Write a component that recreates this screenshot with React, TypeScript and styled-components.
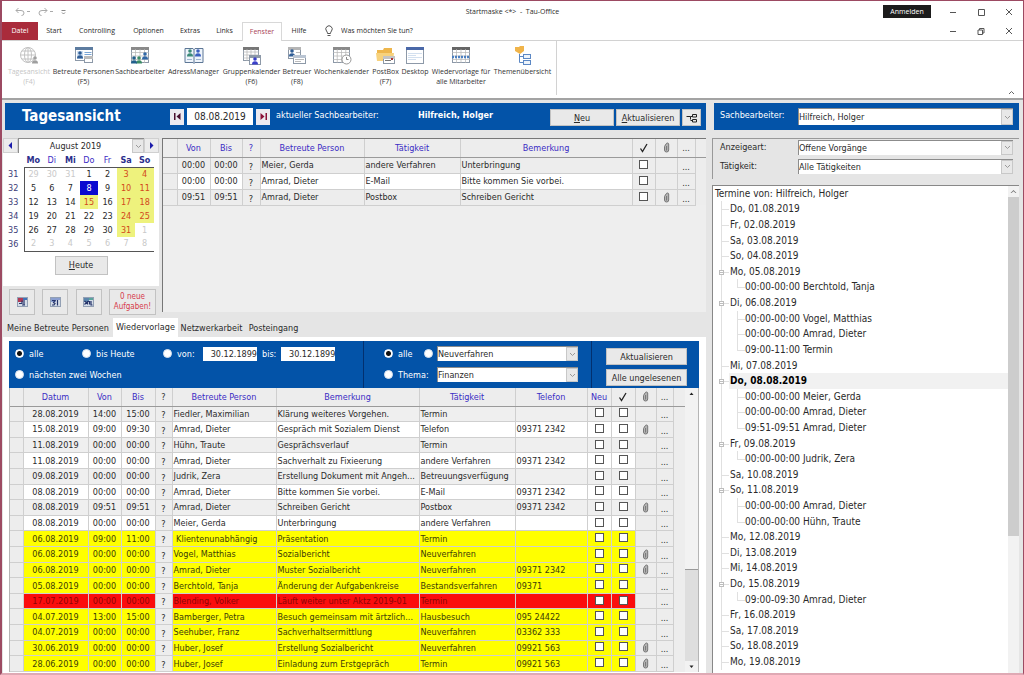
import React from "react";
import styled, { createGlobalStyle, css } from "styled-components";

const blue = "#0353a8";
const panel = "#e5e5e5";
const link = "#3a2cc4";

const GlobalStyle = createGlobalStyle`
  *, *::before, *::after { box-sizing: border-box; }
  body { margin: 0; background: #fff; }
  body, button, input, select, table {
    font-family: "DejaVu Sans Condensed", "DejaVu Sans", sans-serif;
    font-size: 9px;
    line-height: 12px;
    color: #2a2a2a;
  }
  button, input, select { margin: 0; padding: 0; border-radius: 0; }
  input[type="checkbox"], input[type="radio"] { appearance: none; flex: none; }
`;

/* ---------- window frame ---------- */

const Window = styled.div`
  display: flex;
  flex-direction: column;
  height: 100vh;
  min-height: 600px;
  border: solid #9c4a62;
  border-width: 1px 1px 2px 2px;
  border-bottom-color: #dfa9b4;
`;

const TitleBar = styled.header`
  display: grid;
  grid-template-columns: 1fr auto 1fr;
  align-items: center;
  height: 21px;
  padding: 0 4px;
  font-family: "Open Sans", "Noto Sans", sans-serif;
  font-size: 7px;
`;

const QuickAccess = styled.div`
  display: flex;
  align-items: center;
  gap: 5px;
  padding-left: 8px;
`;

const WindowControls = styled.div`
  display: flex;
  align-items: center;
  justify-content: flex-end;
`;

const PlainButton = styled.button`
  display: flex;
  align-items: center;
  justify-content: center;
  border: 0;
  background: none;
`;

const ControlButton = styled(PlainButton)`
  width: 28px;
  height: 16px;
  &:last-child { width: 20px; margin-left: 4px; }
`;

const LoginButton = styled.button`
  width: 48px;
  height: 13px;
  margin-right: 8px;
  border: 0;
  background: #1c1c1c;
  color: #fff;
  font-family: "Open Sans", "Noto Sans", sans-serif;
  font-size: 7px;
`;

const TabBar = styled.nav`
  display: flex;
  align-items: stretch;
  height: 19px;
  padding-right: 4px;
  border-bottom: 1px solid #d2d2d2;
`;

const RibbonTab = styled.button<{ $kind?: "file" | "active"; $width: number }>`
  width: ${(p) => p.$width}px;
  border: 0;
  background: #fff;
  font-family: "Open Sans", "Noto Sans", sans-serif;
  font-size: 7px;
  ${(p) => p.$kind === "file" && css`
    background: #a92b3b;
    color: #fff;
  `}
  ${(p) => p.$kind === "active" && css`
    margin-bottom: -1px;
    border: solid #d8d8d8;
    border-width: 1px 1px 0;
    color: #a94458;
  `}
`;

const TellMe = styled.label`
  display: flex;
  flex: 1;
  align-items: center;
  gap: 8px;
  padding-left: 9px;
  input {
    flex: 1;
    min-width: 0;
    border: 0;
    font-family: "Open Sans", "Noto Sans", sans-serif;
    font-size: 7px;
  }
  input::placeholder { color: #2a2a2a; opacity: 1; }
`;

const Ribbon = styled.div`
  display: flex;
  height: 59px;
  padding: 0 4px 3px 3px;
  border-bottom: 2px solid #a3a3a3;
`;

const RibbonGroup = styled.div`
  display: flex;
  padding-right: 3px;
  border-right: 1px solid #d2d2d2;
`;

const RibbonItem = styled.button<{ $width: number; $muted?: boolean }>`
  display: flex;
  flex-direction: column;
  align-items: center;
  gap: 2px;
  width: ${(p) => p.$width}px;
  padding-top: 5px;
  border: 0;
  background: none;
  font-family: "Open Sans", "Noto Sans", sans-serif;
  font-size: 7px;
  line-height: 10px;
  white-space: pre;
  color: ${(p) => (p.$muted ? "#c6c6c6" : "#333")};
`;

const CollapseButton = styled(PlainButton)`
  align-self: flex-end;
  margin: 0 2px 0 auto;
  padding: 0 2px;
`;

/* ---------- shared form parts ---------- */

const PushButton = styled.button<{ $width: number; $height?: number }>`
  width: ${(p) => p.$width}px;
  height: ${(p) => p.$height ?? 17}px;
  border: 1px solid #c2c2c2;
  background: #e9e9e9;
  white-space: nowrap;
`;

const IconButton = styled(PushButton)<{ $red?: boolean }>`
  display: flex;
  align-items: center;
  justify-content: center;
  color: ${(p) => (p.$red ? "#d63a4a" : "#2a2a2a")};
  font-size: ${(p) => (p.$red ? 8 : 9)}px;
  line-height: 10px;
  white-space: pre;
`;

const SelectFrame = styled.span`
  display: flex;
  flex: 1;
  min-width: 0;
  height: 15px;
  border: solid #8c8c8c;
  border-width: 1px 0 0 1px;
  background: #fff;
  select {
    flex: 1;
    min-width: 0;
    appearance: none;
    border: 0;
    background: none;
  }
`;

const Chevron = styled.span`
  display: flex;
  align-items: center;
  justify-content: center;
  width: 12px;
  border: 1px solid #c8c8c8;
  background: #e8e8e8;
`;

const ChevronIcon = () => (
  <svg width="7" height="5" viewBox="0 0 7 5" fill="none" stroke="#999"><path d="M1 1l2.500 2.500L6 1" /></svg>
);

const DropDown = ({ label, value, id }: { label?: string; value: string; id?: string }) => (
  <SelectFrame>
    <select id={id} aria-label={label} defaultValue={value}>
      <option>{value}</option>
    </select>
    <Chevron><ChevronIcon /></Chevron>
  </SelectFrame>
);

const Radio = styled.input.attrs({ type: "radio" })`
  width: 9px;
  height: 9px;
  margin: 0;
  border: 1px solid #d9e3ef;
  border-radius: 50%;
  background: #fff;
  &:checked {
    border-color: #fff;
    background: radial-gradient(circle, #111 0 2px, #fff 3px);
  }
`;

const RadioLabel = styled.label<{ $width?: number }>`
  display: flex;
  flex: none;
  align-items: center;
  gap: 5px;
  width: ${(p) => (p.$width ? p.$width + "px" : "auto")};
  color: #fff;
  white-space: nowrap;
`;

const CheckBox = styled.input.attrs({ type: "checkbox" })`
  display: block;
  width: 9px;
  height: 9px;
  margin: 0 auto 2px;
  border: 1px solid #555;
  background: #fff;
`;

/* ---------- body layout ---------- */

const Body = styled.main`
  display: flex;
  flex: 1;
  gap: 6px;
  min-height: 0;
  padding: 3px 4px 0 1px;
  background: ${panel};
`;

const MainColumn = styled.div`
  display: flex;
  flex: 1;
  flex-direction: column;
  min-width: 0;
`;

const SideColumn = styled.aside`
  display: flex;
  flex-direction: column;
  width: 307px;
  min-height: 0;
`;

const BlueBar = styled.div`
  display: flex;
  flex: none;
  align-items: center;
  height: 27px;
  margin-left: 2px;
  background: ${blue};
  color: #fff;
`;

const Heading = styled.h1`
  width: 165px;
  margin: 0;
  padding: 0 0 2px 17px;
  font-size: 15px;
  line-height: 20px;
`;

const DateBox = styled.input`
  width: 66px;
  height: 17px;
  border: 0;
  margin: 0 3px;
  font-size: 10px;
  text-align: center;
`;

const StepButton = styled(PlainButton)`
  width: 14px;
  height: 16px;
  background: #eceaf0;
`;

const BarText = styled.span<{ $width: number }>`
  width: ${(p) => p.$width}px;
  padding: 0 0 4px 6px;
  white-space: nowrap;
`;

const BarActions = styled.div`
  display: flex;
  gap: 2px;
  margin: 2px 5px 0 auto;
`;

const Upper = styled.section`
  display: flex;
  flex: none;
  gap: 3px;
  height: 180px;
  margin-top: 8px;
`;

const CalendarColumn = styled.div`
  display: flex;
  flex-direction: column;
  width: 156px;
`;

const CalendarCard = styled.div`
  display: flex;
  flex-direction: column;
  align-items: center;
  height: 148px;
  background: #fff;
`;

const MonthRow = styled.div`
  display: flex;
  align-self: stretch;
  height: 15px;
  background: #ececec;
  select { text-align: center; text-align-last: center; }
`;

const MonthButton = styled(PlainButton)`
  width: 15px;
  border: 1px solid #d0d0d0;
`;

const CalendarTable = styled.table`
  align-self: flex-start;
  width: 151px;
  margin: 0 0 4px;
  border-collapse: collapse;
  table-layout: fixed;
  th, td { padding: 0; text-align: center; }
  thead th {
    height: 14px;
    border-bottom: 1px solid #555;
    font-weight: normal;
    color: ${link};
  }
  thead th.strong { font-weight: bold; color: #2b2f8c; }
  thead td { width: 21px; }
  tbody th {
    font-weight: normal;
    color: #3c3c78;
    border-right: 1px solid #555;
  }
  tbody tr { height: 14px; }
  tbody tr:last-child td { border-bottom: 1px solid #555; }
`;

const Day = styled.td<{ $kind: string }>`
  line-height: 13px;
  ${(p) => p.$kind === "out" && css`color: #c9c9c9;`}
  ${(p) => p.$kind === "off" && css`background: #eef27d; color: #d2491c;`}
  ${(p) => p.$kind === "sel" && css`background: #0a0ad0; color: #fff;`}
`;

const ShortcutRow = styled.div`
  display: flex;
  align-items: center;
  justify-content: space-between;
  flex: 1;
  padding: 0 3px 0 6px;
`;

/* ---------- data grids ---------- */

const Grid = styled.table`
  width: 100%;
  border-collapse: collapse;
  table-layout: fixed;
  th, td {
    overflow: hidden;
    padding: 0 1px;
    border: 1px solid #cfcfcf;
    white-space: nowrap;
    text-overflow: ellipsis;
  }
  th {
    height: 18px;
    border-top: 0;
    border-bottom-color: #9a9a9a;
    background: #ededed;
    font-weight: normal;
    color: ${link};
  }
  th.dark { color: #333; }
  th:first-child, td:first-child { border-left: 0; }
  th:last-child { border-right: 0; }
  th svg, td svg { display: block; margin: 0 auto; }
`;

const Row = styled.tr<{ $bg: string; $color?: string; $height: number }>`
  height: ${(p) => p.$height}px;
  td { background: ${(p) => p.$bg}; color: ${(p) => p.$color ?? "#2a2a2a"}; }
  td.c { text-align: center; }
  td.low { text-align: center; vertical-align: bottom; }
  td.plain { background: #ededed; color: #2a2a2a; }
  td.none { border: 0; background: #ededed; }
`;

const UpperList = styled.div`
  flex: 1;
  min-width: 0;
  height: 174px;
  border: solid #777;
  border-width: 1px 0 0 1px;
  background: #eeeeee;
`;

const TabStrip = styled.div`
  display: flex;
  flex: none;
  align-items: stretch;
  height: 19px;
`;

const FormTab = styled.button<{ $width: number; $active?: boolean }>`
  width: ${(p) => p.$width}px;
  border: 0;
  background: ${(p) => (p.$active ? "#fff" : "transparent")};
  padding: ${(p) => (p.$active ? "0 0 2px" : "0")};
  white-space: nowrap;
`;

const TabPage = styled.section`
  display: flex;
  flex: 1;
  flex-direction: column;
  min-height: 0;
  padding: 4px 7px 1px 6px;
  background: #fff;
`;

const FilterBar = styled.div`
  display: flex;
  flex: none;
  height: 47px;
  background: ${blue};
`;

const FilterGroup = styled.fieldset<{ $width?: number; $inset?: number }>`
  display: flex;
  flex-direction: column;
  gap: 6px;
  width: ${(p) => (p.$width ? p.$width + "px" : "auto")};
  min-width: 0;
  margin: 0;
  padding: 5px 13px 0 ${(p) => p.$inset ?? 6}px;
  border: 0;
  border-right: 1px solid #02306f;
`;

const FilterActions = styled.div`
  display: flex;
  flex: 1;
  flex-direction: column;
  align-items: flex-end;
  gap: 4px;
  padding: 7px 12px 0 0;
`;

const FilterLine = styled.div`
  display: flex;
  align-items: center;
  height: 15px;
`;

const RangeBox = styled.input`
  width: 54px;
  height: 14px;
  margin: 0 5px;
  border: 0;
  text-align: right;
`;

const GridArea = styled.div`
  display: flex;
  flex: 1;
  min-height: 0;
  border: solid #b5b5b5;
  border-width: 0 1px;
  background: #ededed;
  table { height: 100%; }
`;

const ScrollBar = styled.div<{ $width: number }>`
  display: flex;
  flex: none;
  flex-direction: column;
  align-items: center;
  width: ${(p) => p.$width}px;
  background: #f2f2f2;
  svg { flex: none; margin: 2px 0; }
`;

const ScrollSpace = styled.div<{ $grow: number }>`
  flex: ${(p) => p.$grow};
`;

const ScrollThumb = styled.div<{ $grow: number }>`
  flex: ${(p) => p.$grow};
  align-self: stretch;
  background: #cdcdcd;
`;

const LowerThumb = styled(ScrollThumb)`
  border-top: 1px solid #999;
  background: #dedede;
`;

/* ---------- side column ---------- */

const SideField = styled.div<{ $light?: boolean }>`
  display: flex;
  flex: 1;
  align-items: center;
  color: ${(p) => (p.$light ? "#fff" : "#2a2a2a")};
  label { width: 78px; padding-bottom: ${(p) => (p.$light ? 4 : 1)}px; }
  ${SelectFrame} { height: ${(p) => (p.$light ? 17 : 15)}px; }
`;

const SideBar = styled(BlueBar)`
  padding: 0 6px;
`;

const FilterBox = styled.div`
  display: flex;
  flex: none;
  flex-direction: column;
  gap: 3px;
  height: 41px;
  margin-top: 8px;
  padding: 0 6px 5px 7px;
  border: solid #999;
  border-width: 1px 0 0 1px;
`;

const TreeFrame = styled.div`
  display: flex;
  flex: 1;
  min-height: 0;
  margin-top: 6px;
  border: solid #888;
  border-width: 1px 0 0 1px;
  background: #fff;
`;

const Tree = styled.ul`
  display: flex;
  flex: 1;
  flex-direction: column;
  margin: 0;
  padding: 0 0 3px;
  list-style: none;
  font-size: 10px;
`;

const TreeRow = styled.li<{ $current?: boolean }>`
  display: flex;
  flex: 1;
  align-items: center;
  min-height: 0;
  padding-left: 2px;
  white-space: pre;
  ${(p) => p.$current && css`
    background: linear-gradient(90deg, #fff 16px, #f1f1f1 16px);
    color: #000;
    font-weight: bold;
  `}
`;

const Branch = styled.svg`
  flex: none;
  width: 15px;
  height: 16px;
  stroke: #e0e0e0;
  fill: none;
  shape-rendering: crispEdges;
`;

/* ---------- icons ---------- */

const Triangle = ({ d, color = "#1c1caa" }: { d: string; color?: string }) => (
  <svg width="7" height="7" viewBox="0 0 7 7" fill={color}><path d={d} /></svg>
);

const Tick = () => (
  <svg width="10" height="10" viewBox="0 0 10 10" fill="none" stroke="#222"><path d="M1.500 5.500l2 3 4.500-7.500" strokeWidth="1.300" /></svg>
);

const Clip = () => (
  <svg width="7" height="11" viewBox="0 0 7 11" fill="#b4b4b4" stroke="#777">
    <path d="M1.500 4.500l1.500-2.500q.6-1 1.500-1t1.200 1v6q0 2-2.100 2t-2.100-2zM3.600 4v4.500" />
  </svg>
);

const Hierarchy = () => (
  <svg width="12" height="10" viewBox="0 0 12 10" fill="none" stroke="#222">
    <path d="M.5 3.500h4v3M6.500 1.500h4V4h-4zM6.500 6.500h4V9h-4zM4.500 3.500h2M4.500 7.500h2" />
  </svg>
);

const Sheet = ({ x, y, w, h, head }: { x: number; y: number; w: number; h: number; head: string }) => (
  <g>
    <rect x={x + 0.5} y={y + 0.5} width={w - 1} height={h - 1} fill="#fff" stroke="#8d99a8" />
    <rect x={x} y={y} width={w} height="3" fill={head} />
  </g>
);

const Lattice = ({ x, y, w, h }: { x: number; y: number; w: number; h: number }) => (
  <path
    fill="none"
    stroke="#b4b4b4"
    strokeWidth=".7"
    d={[1, 2, 3].map((i) => `M${x + (w * i) / 4} ${y}v${h}M${x} ${y + (h * i) / 4}h${w}`).join("")}
  />
);

const Person = ({ x, y, color }: { x: number; y: number; color: string }) => (
  <g fill={color}>
    <circle cx={x} cy={y} r="1.800" />
    <path d={`M${x - 3} ${y + 5.5}q0-3.200 3-3.200t3 3.200z`} />
  </g>
);

const ribbonIcons: Record<string, React.ReactNode> = {
  globe: (
    <g stroke="#c2c2c2" fill="none">
      <circle cx="9" cy="9" r="7.500" /><ellipse cx="9" cy="9" rx="3.500" ry="7.500" />
      <path d="M1.500 9h15M3 5h12M3 13h12M9 1.500v15" />
      <g stroke="none"><Person x={16} y={12} color="#9f9f9f" /></g>
    </g>
  ),
  clients: (
    <g>
      <Sheet x={1} y={1} w={18} h={14} head="#5d7ca0" />
      <rect x="3" y="5" width="6" height="8" fill="#cfe0f2" /><Person x={6} y={7} color="#2f5d96" />
      <path d="M10.500 6.500h7M10.500 8.500h7" stroke="#7aa6d6" />
      <Sheet x={10} y={10} w={9} h={7} head="#bcbcbc" />
    </g>
  ),
  staff: (
    <g>
      <Sheet x={1} y={1} w={18} h={16} head="#8a8a8a" /><Lattice x={1} y={3} w={18} h={14} />
      <Person x={15} y={8} color="#2f66a5" /><Person x={9} y={12} color="#3d8c66" /><Person x={4} y={12} color="#215f8c" />
    </g>
  ),
  book: (
    <g>
      <path d="M1 2.500h8l1 1 1-1h8v14h-8l-1 1-1-1H1z" fill="#eef4fb" stroke="#5d7796" />
      <path d="M10 3v14" stroke="#5d7796" />
      <Person x={6} y={5} color="#3b8a78" /><Person x={14} y={5} color="#3a5fc0" />
      <path d="M3 13.500h5M12 13.500h5" stroke="#9fb6d0" />
    </g>
  ),
  group: (
    <g>
      <Sheet x={1} y={1} w={16} h={14} head="#777" /><Lattice x={1} y={3} w={16} h={12} />
      <Sheet x={7} y={9} w={12} h={10} head="#8d99a8" /><Person x={13} y={13} color="#3a3fc8" />
    </g>
  ),
  carer: (
    <g>
      <Sheet x={1} y={1} w={13} h={12} head="#b5b5b5" /><Person x={5} y={5} color="#2f5d96" />
      <path d="M9 6.500h4" stroke="#bbb" />
      <Sheet x={6} y={9} w={13} h={9} head="#b9c4d2" /><path d="M8 13.500h9M8 15.500h6" stroke="#bbb" />
    </g>
  ),
  week: (
    <g>
      <Sheet x={1} y={1} w={17} h={16} head="#8a8a8a" /><Lattice x={1} y={3} w={17} h={14} />
      <circle cx="14.500" cy="13.500" r="4.500" fill="#fff" stroke="#999" /><path d="M14.500 11v2.500h2" fill="none" stroke="#888" />
    </g>
  ),
  post: (
    <g>
      <path d="M1 4h6l1-2h8v12H1z" fill="#eeb64c" /><path d="M0 7h18l-1 8H1z" fill="#f7d27d" />
      <Sheet x={7} y={10} w={12} h={8} head="#c4c4c4" /><path d="M9 14.500h6" stroke="#777" /><rect x="15" y="12" width="2" height="2" fill="#a33" />
    </g>
  ),
  desktop: (
    <g>
      <Sheet x={1} y={1} w={18} h={17} head="#4a68a8" />
      <path d="M3 7.500h14M3 9.500h8M3 11.500h14M3 13.500h8" stroke="#d3e0ef" />
    </g>
  ),
  resubmit: (
    <g>
      <Sheet x={1} y={1} w={18} h={16} head="#666" /><Lattice x={1} y={3} w={18} h={14} />
      <path d="M1 11h18" stroke="#4b7fc0" strokeWidth="2.500" strokeDasharray="2 1" />
    </g>
  ),
  topics: (
    <g fill="none">
      <path d="M2 1h4l1-1h4v5l-4 3-5-3z" fill="#f0b44a" />
      <path d="M6.500 8v8.500H10M6.500 10.500H10" stroke="#5c88c4" />
      <rect x="10.500" y="8.500" width="7" height="4" stroke="#5c88c4" fill="#eef4fb" />
      <rect x="10.500" y="14.500" width="7" height="4" stroke="#5c88c4" fill="#eef4fb" />
    </g>
  ),
};

const MiniGlyph = ({ left, right, mark }: { left: string; right: string; mark: string }) => (
  <svg width="11" height="10" viewBox="0 0 11 10">
    <rect x=".5" y=".5" width="10" height="9" fill="#d5dde8" stroke="#93a0b4" />
    <rect x="1" y="1" width="5" height="4" fill={left} />
    <rect x="6" y="1" width="4" height="2" fill={right} />
    <path d={mark} fill="none" stroke="#27356b" strokeWidth="1.200" />
  </svg>
);

/* ---------- data ---------- */

const ribbonItems: [string, string, number, boolean?][] = [
  ["globe", "Tagesansicht\n(F4)", 48, true],
  ["clients", "Betreute Personen\n(F5)", 61],
  ["staff", "Sachbearbeiter", 52],
  ["book", "AdressManager", 55],
  ["group", "Gruppenkalender\n(F6)", 61],
  ["carer", "Betreuer\n(F8)", 30],
  ["week", "Wochenkalender", 59],
  ["post", "PostBox\n(F7)", 29],
  ["desktop", "Desktop", 30],
  ["resubmit", "Wiedervorlage für\nalle Mitarbeiter", 62],
  ["topics", "Themenübersicht", 61],
];

const weekdays: [string, boolean][] = [
  ["Mo", true], ["Di", false], ["Mi", true], ["Do", false], ["Fr", false], ["Sa", true], ["So", true],
];

const weeks: [number, number[]][] = [
  [31, [29, 30, 31, 1, 2, 3, 4]],
  [32, [5, 6, 7, 8, 9, 10, 11]],
  [33, [12, 13, 14, 15, 16, 17, 18]],
  [34, [19, 20, 21, 22, 23, 24, 25]],
  [35, [26, 27, 28, 29, 30, 31, 1]],
  [36, [2, 3, 4, 5, 6, 7, 8]],
];

const dayKind = (row: number, col: number, day: number) => {
  if ((row === 0 && day > 20) || (row > 3 && day < 10)) return "out";
  if (row === 1 && day === 8) return "sel";
  return col > 4 || day === 15 ? "off" : "in";
};

const todayRows = [
  ["00:00", "00:00", "Meier, Gerda", "andere Verfahren", "Unterbringung", ""],
  ["00:00", "00:00", "Amrad, Dieter", "E-Mail", "Bitte kommen Sie vorbei.", ""],
  ["09:51", "09:51", "Amrad, Dieter", "Postbox", "Schreiben Gericht", "x"],
];

const rows = [
  ["28.08.2019", "14:00", "15:00", "Fiedler, Maximilian", "Klärung weiteres Vorgehen.", "Termin", "", ""],
  ["15.08.2019", "09:00", "09:30", "Amrad, Dieter", "Gespräch mit Sozialem Dienst", "Telefon", "09371 2342", "x"],
  ["11.08.2019", "00:00", "00:00", "Hühn, Traute", "Gesprächsverlauf", "Termin", "", ""],
  ["11.08.2019", "00:00", "00:00", "Amrad, Dieter", "Sachverhalt zu Fixieerung", "andere Verfahren", "09371 2342", ""],
  ["09.08.2019", "00:00", "00:00", "Judrik, Zera", "Erstellung Dokument mit Angeh...", "Betreuungsverfügung", "", ""],
  ["08.08.2019", "00:00", "00:00", "Amrad, Dieter", "Bitte kommen Sie vorbei.", "E-Mail", "09371 2342", ""],
  ["08.08.2019", "09:51", "09:51", "Amrad, Dieter", "Schreiben Gericht", "Postbox", "09371 2342", "x"],
  ["08.08.2019", "00:00", "00:00", "Meier, Gerda", "Unterbringung", "andere Verfahren", "", ""],
  ["06.08.2019", "09:00", "11:00", "\u00a0Klientenunabhängig", "Präsentation", "Termin", "", ""],
  ["06.08.2019", "00:00", "00:00", "Vogel, Matthias", "Sozialbericht", "Neuverfahren", "", "x"],
  ["06.08.2019", "00:00", "00:00", "Amrad, Dieter", "Muster Sozialbericht", "Neuverfahren", "09371 2342", "x"],
  ["05.08.2019", "00:00", "00:00", "Berchtold, Tanja", "Änderung der Aufgabenkreise", "Bestandsverfahren", "09371", ""],
  ["17.07.2019", "00:00", "00:00", "Blending, Volker", "Läuft weiter unter Aktz 2019-01", "Termin", "", ""],
  ["04.07.2019", "13:00", "15:00", "Bamberger, Petra", "Besuch gemeinsam mit ärtzlich...", "Hausbesuch", "095 24422", ""],
  ["04.07.2019", "00:00", "00:00", "Seehuber, Franz", "Sachverhaltsermittlung", "Neuverfahren", "03362 333", ""],
  ["30.06.2019", "00:00", "00:00", "Huber, Josef", "Erstellung Sozialbericht", "Neuverfahren", "09921 563", "x"],
  ["28.06.2019", "00:00", "00:00", "Huber, Josef", "Einladung zum Erstgepräch", "Termin", "09921 563", "x"],
];

const tree: [string, string[]][] = [
  ["Do, 01.08.2019", []],
  ["Fr, 02.08.2019", []],
  ["Sa, 03.08.2019", []],
  ["So, 04.08.2019", []],
  ["Mo, 05.08.2019", ["00:00-00:00 Berchtold, Tanja"]],
  ["Di, 06.08.2019", ["00:00-00:00 Vogel, Matthias", "00:00-00:00 Amrad, Dieter", "09:00-11:00 Termin"]],
  ["Mi, 07.08.2019", []],
  ["Do, 08.08.2019", ["00:00-00:00 Meier, Gerda", "00:00-00:00 Amrad, Dieter", "09:51-09:51 Amrad, Dieter"]],
  ["Fr, 09.08.2019", ["00:00-00:00 Judrik, Zera"]],
  ["Sa, 10.08.2019", []],
  ["So, 11.08.2019", ["00:00-00:00 Amrad, Dieter", "00:00-00:00 Hühn, Traute"]],
  ["Mo, 12.08.2019", []],
  ["Di, 13.08.2019", []],
  ["Mi, 14.08.2019", []],
  ["Do, 15.08.2019", ["09:00-09:30 Amrad, Dieter"]],
  ["Fr, 16.08.2019", []],
  ["Sa, 17.08.2019", []],
  ["So, 18.08.2019", []],
  ["Mo, 19.08.2019", []],
];

const rowColors = (i: number) => {
  if (i === 12) return { $bg: "#fb0d0d", $color: "#8a0606" };
  if (i > 7) return { $bg: "#ffff00", $color: "#3c3c08" };
  return { $bg: i % 2 ? "#ffffff" : "#efefef" };
};

const Cols = ({ widths }: { widths: (number | null)[] }) => (
  <colgroup>
    {widths.map((w, i) => <col key={i} width={w ?? undefined} />)}
  </colgroup>
);

const winPaths = ["M2 5.500h6", "M2.500 2.500h6v6h-6z", "M2 2l6 6M8 2l-6 6"];

const Controls = ({ restore }: { restore?: boolean }) => (
  <>
    {["Minimieren", restore ? "Wiederherstellen" : "Maximieren", "Schließen"].map((name, i) => (
      <ControlButton key={name} aria-label={name}>
        <svg width="10" height="10" viewBox="0 0 10 10" fill="none" stroke="#555">
          <path d={i === 1 && restore ? "M2 4h4.500v4.500H2zM3.500 4V2.500H8V7H6.500" : winPaths[i]} />
        </svg>
      </ControlButton>
    ))}
  </>
);

/* ---------- page sections ---------- */

const Calendar = () => (
  <CalendarColumn>
    <CalendarCard>
      <MonthRow>
        <MonthButton aria-label="Voriger Monat"><Triangle d="M5 0v7L1.500 3.500z" /></MonthButton>
        <DropDown label="Monat" value="August 2019" />
        <MonthButton aria-label="Nächster Monat"><Triangle d="M2 0v7l3.500-3.500z" /></MonthButton>
      </MonthRow>
      <CalendarTable>
        <thead>
          <tr>
            <td />
            {weekdays.map(([name, strong]) => (
              <th key={name} className={strong ? "strong" : undefined}>{name}</th>
            ))}
          </tr>
        </thead>
        <tbody>
          {weeks.map(([week, days], r) => (
            <tr key={week}>
              <th>{week}</th>
              {days.map((day, c) => <Day key={c} $kind={dayKind(r, c, day)}>{day}</Day>)}
            </tr>
          ))}
        </tbody>
      </CalendarTable>
      <PushButton $width={53} $height={19}><u>H</u>eute</PushButton>
    </CalendarCard>
    <ShortcutRow>
      <IconButton $width={26} $height={26} aria-label="Termine">
        <MiniGlyph left="#b23a55" right="#3f73b8" mark="M2 6.500h3V3.500M7 3v5M5 8h3" />
      </IconButton>
      <IconButton $width={26} $height={26} aria-label="Kalender">
        <MiniGlyph left="#8b9fd0" right="#8b9fd0" mark="M2 3.500h3L3.500 5.500 5 6.500 4 8H2M7.500 3v5.500" />
      </IconButton>
      <IconButton $width={26} $height={26} aria-label="Jahresansicht">
        <MiniGlyph left="#5c86ad" right="#5aa59c" mark="M1.500 4l2 1.500-2 2M4.500 7.500V4.500h2v3M8 4v4h1.500" />
      </IconButton>
      <IconButton $width={47} $height={26} $red>{"0 neue\nAufgaben!"}</IconButton>
    </ShortcutRow>
  </CalendarColumn>
);

const TodayGrid = () => (
  <UpperList>
    <Grid>
      <Cols widths={[14, 33, 32, 18, 104, 96, null, 23, 22, 18, 11]} />
      <thead>
        <tr>
          <th /><th>Von</th><th>Bis</th><th>?</th><th>Betreute Person</th><th>Tätigkeit</th><th>Bemerkung</th>
          <th><Tick /></th><th><Clip /></th><th className="dark">...</th><th />
        </tr>
      </thead>
      <tbody>
        {todayRows.map(([from, to, person, kind, note, clip], i) => (
          <Row key={i} $height={16} $bg={i === 1 ? "#ffffff" : "#ededed"}>
            <td className="plain" />
            <td className="c">{from}</td>
            <td className="c">{to}</td>
            <td className="low plain">?</td>
            <td>{person}</td>
            <td>{kind}</td>
            <td>{note}</td>
            <td className="plain"><CheckBox aria-label="Erledigt" /></td>
            <td className="plain">{clip && <Clip />}</td>
            <td className="low plain">...</td>
            <td className="none" />
          </Row>
        ))}
      </tbody>
    </Grid>
  </UpperList>
);

const Filters = () => (
  <FilterBar>
    <FilterGroup $width={355}>
      <FilterLine>
        <RadioLabel $width={67}><Radio name="range" defaultChecked />alle</RadioLabel>
        <RadioLabel $width={81}><Radio name="range" />bis Heute</RadioLabel>
        <RadioLabel $width={35}><Radio name="range" />von:</RadioLabel>
        <RangeBox aria-label="von" defaultValue="30.12.1899" />
        <RadioLabel htmlFor="range-to">bis:</RadioLabel>
        <RangeBox id="range-to" defaultValue="30.12.1899" />
      </FilterLine>
      <FilterLine>
        <RadioLabel><Radio name="range" />nächsten zwei Wochen</RadioLabel>
      </FilterLine>
    </FilterGroup>
    <FilterGroup $width={228} $inset={20}>
      <FilterLine>
        <RadioLabel $width={40}><Radio name="topic" defaultChecked />alle</RadioLabel>
        <RadioLabel $width={13}><Radio name="topic" aria-label="Tätigkeit" /></RadioLabel>
        <DropDown label="Tätigkeit" value="Neuverfahren" />
      </FilterLine>
      <FilterLine>
        <RadioLabel $width={53}><Radio name="topic" />Thema:</RadioLabel>
        <DropDown label="Thema" value="Finanzen" />
      </FilterLine>
    </FilterGroup>
    <FilterActions>
      <PushButton $width={81}>Aktualisieren</PushButton>
      <PushButton $width={81}>Alle ungelesenen</PushButton>
    </FilterActions>
  </FilterBar>
);

const ResubmissionGrid = () => (
  <GridArea>
    <Grid>
      <Cols widths={[13, 65, 33, 34, 17, 104, null, 96, 72, 24, 24, 21, 17, 12]} />
      <thead>
        <tr>
          <th /><th>Datum</th><th>Von</th><th>Bis</th><th className="dark">?</th><th>Betreute Person</th>
          <th>Bemerkung</th><th>Tätigkeit</th><th>Telefon</th><th>Neu</th><th><Tick /></th><th><Clip /></th>
          <th className="dark">...</th><th />
        </tr>
      </thead>
      <tbody>
        {rows.map(([date, from, to, person, note, kind, phone, clip], i) => (
          <Row key={i} $height={15} {...rowColors(i)}>
            <td className="plain" />
            <td className="c">{date}</td>
            <td className="c">{from}</td>
            <td className="c">{to}</td>
            <td className="low plain">?</td>
            <td>{person}</td>
            <td>{note}</td>
            <td>{kind}</td>
            <td>{phone}</td>
            <td><CheckBox aria-label="Neu" /></td>
            <td><CheckBox aria-label="Erledigt" /></td>
            <td className="plain">{clip && <Clip />}</td>
            <td className="low plain">...</td>
            <td className="none" />
          </Row>
        ))}
      </tbody>
    </Grid>
    <ScrollBar $width={13}>
      <Triangle color="#222" d="M1.500 5L3.500 2.500 5.500 5z" />
      <ScrollSpace $grow={171} />
      <LowerThumb $grow={91} />
      <Triangle color="#222" d="M1.500 2.500L3.500 5 5.500 2.500z" />
    </ScrollBar>
  </GridArea>
);

const AppointmentTree = () => (
  <TreeFrame>
    <Tree>
      <TreeRow>Termine von: Hilfreich, Holger</TreeRow>
      {tree.map(([day, entries]) => (
        <React.Fragment key={day}>
          <TreeRow $current={day === "Do, 08.08.2019"}>
            <Branch viewBox="0 0 15 16">
              <path d="M6.500 0v16M7 8.500h7" />
              {entries.length > 0 && <path d="M4.500 6.500h4v4h-4zM5 8.500h3" stroke="#bdbdbd" fill="#fff" />}
            </Branch>
            {day}
          </TreeRow>
          {entries.map((entry, i) => (
            <TreeRow key={entry}>
              <Branch viewBox="0 0 15 16"><path d="M6.500 0v16" /></Branch>
              <Branch viewBox="0 0 15 16">
                <path d={i === entries.length - 1 ? "M7.500 0v8.500h7" : "M7.500 0v16M7.500 8.500h7"} />
              </Branch>
              {entry}
            </TreeRow>
          ))}
        </React.Fragment>
      ))}
    </Tree>
    <ScrollBar $width={11}>
      <Triangle color="#777" d="M.5 5L3.500 2l3 3H5.500L3.500 3.200 1.500 5z" />
      <ScrollThumb $grow={338} />
      <ScrollSpace $grow={137} />
    </ScrollBar>
  </TreeFrame>
);

export default function App() {
  return (
    <Window>
      <GlobalStyle />
      <TitleBar>
        <QuickAccess>
          <PlainButton aria-label="Rückgängig">
            <svg width="18" height="10" viewBox="0 0 18 10" fill="none" stroke="#aaa"><path d="M4.500 1L2 3.500 4.500 6M2 3.500h5q3 0 3 2.500T7.500 8.500M13 4.500h3" /></svg>
          </PlainButton>
          <PlainButton aria-label="Wiederholen">
            <svg width="18" height="10" viewBox="0 0 18 10" fill="none" stroke="#aaa"><path d="M7.500 1L10 3.500 7.500 6M10 3.500H5q-3 0-3 2.500t2.500 2.500M13 4.500h3" /></svg>
          </PlainButton>
          <PlainButton aria-label="Anpassen">
            <svg width="7" height="8" viewBox="0 0 7 8" fill="none" stroke="#888"><path d="M1.500 2.500h4M2 4.500l1.500 1.500L5 4.500" /></svg>
          </PlainButton>
        </QuickAccess>
        <span>Startmaske &lt;*&gt; &nbsp;- &nbsp;Tau-Office</span>
        <WindowControls>
          <LoginButton>Anmelden</LoginButton>
          <Controls />
        </WindowControls>
      </TitleBar>
      <TabBar>
        <RibbonTab $kind="file" $width={36}>Datei</RibbonTab>
        <RibbonTab $width={32}>Start</RibbonTab>
        <RibbonTab $width={54}>Controlling</RibbonTab>
        <RibbonTab $width={49}>Optionen</RibbonTab>
        <RibbonTab $width={34}>Extras</RibbonTab>
        <RibbonTab $width={35}>Links</RibbonTab>
        <RibbonTab $kind="active" $width={40}>Fenster</RibbonTab>
        <RibbonTab $width={34}>Hilfe</RibbonTab>
        <TellMe>
          <svg width="8" height="12" viewBox="0 0 8 12" fill="none" stroke="#555"><path d="M2.500 8.500Q2.500 7 1.500 6a3.200 3.200 0 1 1 5 0q-1 1-1 2.500zM2.500 10.500h3" /></svg>
          <input aria-label="Was möchten Sie tun?" placeholder="Was möchten Sie tun?" />
        </TellMe>
        <WindowControls><Controls restore /></WindowControls>
      </TabBar>
      <Ribbon>
        <RibbonGroup>
          {ribbonItems.map(([icon, text, width, muted]) => (
            <RibbonItem key={icon} $width={width} $muted={muted}>
              <svg width="20" height="19" viewBox="0 0 20 19">{ribbonIcons[icon]}</svg>
              {text}
            </RibbonItem>
          ))}
        </RibbonGroup>
        <CollapseButton aria-label="Menüband reduzieren">
          <svg width="7" height="5" viewBox="0 0 7 5" fill="none" stroke="#666"><path d="M1 4l2.500-2.500L6 4" /></svg>
        </CollapseButton>
      </Ribbon>

      <Body>
        <MainColumn>
          <BlueBar>
            <Heading>Tagesansicht</Heading>
            <StepButton aria-label="Voriger Tag"><Triangle color="#4a1030" d="M0 0h1.500v7H0zM6.500 0v7L2.500 3.500z" /></StepButton>
            <DateBox aria-label="Datum" defaultValue="08.08.2019" />
            <StepButton aria-label="Nächster Tag"><Triangle color="#8a1038" d="M5.500 0H7v7H5.500zM.5 0v7l4-3.500z" /></StepButton>
            <BarText $width={142}>aktueller Sachbearbeiter:</BarText>
            <BarText as="b" $width={100}>Hilfreich, Holger</BarText>
            <BarActions>
              <PushButton $width={64}><u>N</u>eu</PushButton>
              <PushButton $width={64}><u>A</u>ktualisieren</PushButton>
              <IconButton $width={19} aria-label="Struktur"><Hierarchy /></IconButton>
            </BarActions>
          </BlueBar>
          <Upper>
            <Calendar />
            <TodayGrid />
          </Upper>
          <TabStrip>
            <FormTab $width={110}>Meine Betreute Personen</FormTab>
            <FormTab $width={65} $active>Wiedervorlage</FormTab>
            <FormTab $width={67}>Netzwerkarbeit</FormTab>
            <FormTab $width={57}>Posteingang</FormTab>
          </TabStrip>
          <TabPage>
            <Filters />
            <ResubmissionGrid />
          </TabPage>
        </MainColumn>
        <SideColumn>
          <SideBar>
            <SideField $light>
              <label htmlFor="agent">Sachbearbeiter:</label>
              <DropDown id="agent" value="Hilfreich, Holger" />
            </SideField>
          </SideBar>
          <FilterBox>
            <SideField>
              <label htmlFor="display">Anzeigeart:</label>
              <DropDown id="display" value="Offene Vorgänge" />
            </SideField>
            <SideField>
              <label htmlFor="activity">Tätigkeit:</label>
              <DropDown id="activity" value="Alle Tätigkeiten" />
            </SideField>
          </FilterBox>
          <AppointmentTree />
        </SideColumn>
      </Body>
    </Window>
  );
}
